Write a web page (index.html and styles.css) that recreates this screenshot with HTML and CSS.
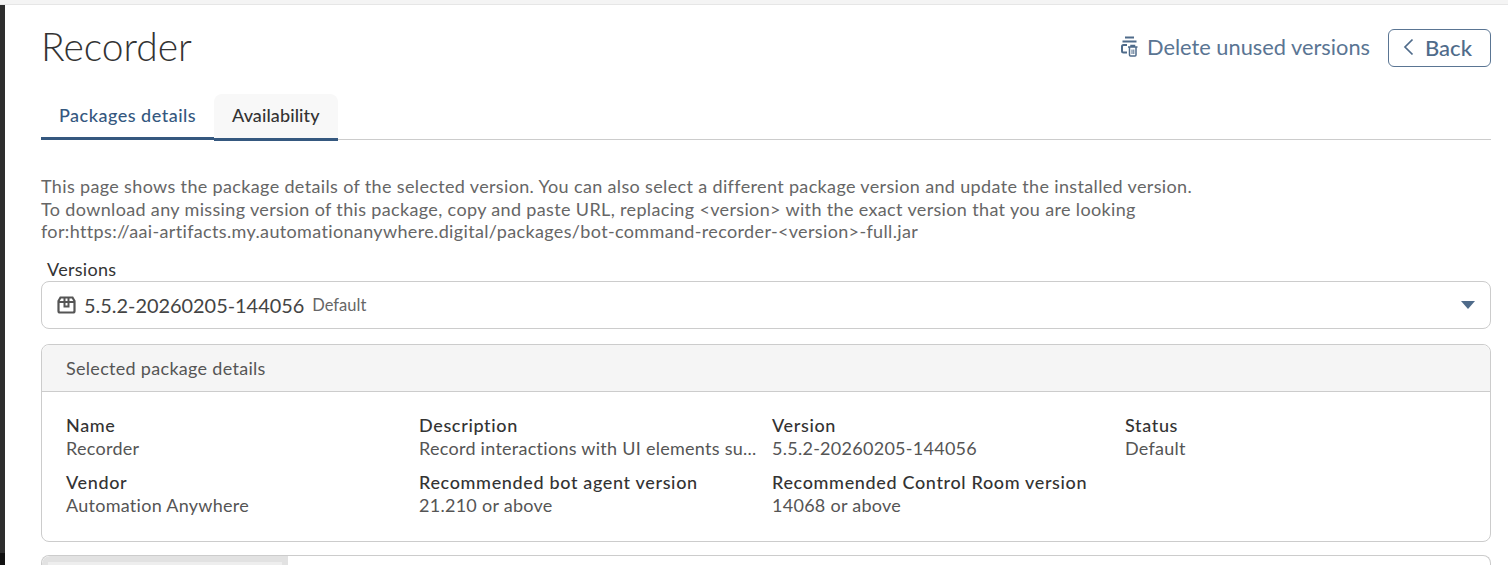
FILE: index.html
```html
<!DOCTYPE html>
<html lang="en">
<head>
    <meta charset="UTF-8">
    <title>Recorder</title>
    <link rel="stylesheet" href="styles.css">
</head>
<body>
    <div class="topstrip"></div>
    <div class="frame">
        <div class="sidebar"></div>
        <div class="page">
            <div class="header">
                <h1 class="title">Recorder</h1>
                <div class="actions">
                    <a class="link-action">
                        <svg width="17" height="21" viewBox="0 0 17 21">
                            <rect x="4" y="0.500" width="9" height="2" fill="#4f6b8a"/>
                            <rect x="1.500" y="4.500" width="14" height="2" fill="#4f6b8a"/>
                            <path d="M6 9H2.500A1.500 1.500 0 0 0 1 10.500V15a1.500 1.500 0 0 0 1.500 1.500H6" fill="none" stroke="#4f6b8a" stroke-width="2"/>
                            <path d="M7 11h9.500M10 11V9.500h3.500V11M8.500 11.500v7.500a1 1 0 0 0 1 1h4.500a1 1 0 0 0 1-1v-7.500" fill="none" stroke="#4f6b8a" stroke-width="1.500"/>
                            <path d="M11 13.500v4.500M12.800 13.500v4.500" stroke="#4f6b8a"/>
                        </svg>
                        <span>Delete unused versions</span>
                    </a>
                    <button class="back-btn">
                        <svg width="11" height="18" viewBox="0 0 11 18"><path d="M9.500 1.500L2 9l7.500 7.500" fill="none" stroke="#4f6b8a" stroke-width="1.700"/></svg>
                        <span>Back</span>
                    </button>
                </div>
            </div>

            <div class="tabs">
                <div class="tab tab-active">Packages details</div>
                <div class="tab tab-alt">Availability</div>
            </div>

            <p class="intro">This page shows the package details of the selected version. You can also select a different package version and update the installed version.<br>
            To download any missing version of this package, copy and paste URL, replacing &lt;version&gt; with the exact version that you are looking<br>
            for:https://aai-artifacts.my.automationanywhere.digital/packages/bot-command-recorder-&lt;version&gt;-full.jar</p>

            <label class="field-label">Versions</label>
            <div class="select">
                <svg width="19" height="18" viewBox="0 0 19 18">
                    <path d="M3.500 1.500h12L17.500 5v10a1.500 1.500 0 0 1-1.500 1.500H3A1.500 1.500 0 0 1 1.500 15V5z" fill="none" stroke="#555" stroke-width="2.200"/>
                    <path d="M1.500 6h16" stroke="#555" stroke-width="2"/>
                    <path d="M7.500 1.500v9h4v-9" fill="none" stroke="#555" stroke-width="2"/>
                </svg>
                <span class="select-value">5.5.2-20260205-144056</span>
                <span class="select-note">Default</span>
                <span class="caret"></span>
            </div>

            <div class="card">
                <div class="card-head">Selected package details</div>
                <div class="card-body">
                    <div class="info"><b>Name</b><span>Recorder</span></div>
                    <div class="info"><b>Description</b><span>Record interactions with UI elements su...</span></div>
                    <div class="info"><b>Version</b><span>5.5.2-20260205-144056</span></div>
                    <div class="info"><b>Status</b><span>Default</span></div>
                    <div class="info"><b>Vendor</b><span>Automation Anywhere</span></div>
                    <div class="info"><b>Recommended bot agent version</b><span>21.210 or above</span></div>
                    <div class="info"><b>Recommended Control Room version</b><span>14068 or above</span></div>
                </div>
            </div>

            <div class="card card-next">
                <div class="next-tab"><div class="next-tab-inner"></div></div>
            </div>
        </div>
    </div>
</body>
</html>
```

FILE: styles.css
```css
html, body {
    height: 565px;
    overflow: hidden;
}
body {
    margin: 0;
    background-color: #fff;
    font-family: 'Lato', 'Open Sans', sans-serif;
    color: #333;
}
.topstrip {
    height: 4px;
    background-color: #f4f4f4;
    border-bottom: 1px solid #e6e6e6;
}
.frame {
    display: flex;
    height: 560px;
}
.sidebar {
    width: 5px;
    background: linear-gradient(#2e2e2e 548px, #111 548px);
}
.page {
    flex: 1;
    padding: 0 17px 0 36px;
    min-width: 0;
}
.header {
    display: flex;
    justify-content: space-between;
    align-items: center;
    padding-top: 19px;
    height: 44px;
}
.title {
    margin: 0;
    font-size: 39px;
    font-weight: 300;
    color: #333;
}
.actions {
    display: flex;
    align-items: center;
    gap: 18px;
    margin-top: 4px;
}
.link-action {
    display: flex;
    align-items: center;
    gap: 9px;
    margin-top: -4px;
    font-size: 21.800px;
    color: #5a7593;
}
.back-btn {
    display: flex;
    align-items: center;
    gap: 11px;
    width: 103px;
    height: 38px;
    padding: 0 14px 2px;
    background: #fff;
    border: 1px solid #5a7593;
    border-radius: 6px;
    font-family: inherit;
    font-size: 22px;
    font-weight: 500;
    color: #4f6b8a;
}
.tabs {
    display: flex;
    margin-top: 26px;
    height: 45px;
    border-bottom: 1px solid #ccc;
}
.tab {
    padding: 0 18px;
    line-height: 42px;
    font-size: 18px;
    font-weight: 500;
    white-space: nowrap;
    box-sizing: border-box;
    height: 46px;
}
.tab-active {
    width: 173px;
    letter-spacing: 0.500px;
    color: #35587f;
    border-bottom: 3px solid #35587f;
}
.tab-alt {
    width: 124px;
    height: 47px;
    letter-spacing: 0.100px;
    background-color: #f8f8f8;
    border-bottom: 3px solid #35587f;
    border-radius: 8px 8px 0 0;
}
.intro {
    margin: 35px 0 0;
    font-size: 18px;
    line-height: 22.500px;
    letter-spacing: 0.350px;
    color: #666;
}
.field-label {
    display: block;
    margin: 15px 0 0 6px;
    font-size: 18px;
    line-height: 22px;
    letter-spacing: 0.300px;
}
.select {
    display: flex;
    align-items: center;
    height: 46px;
    margin-top: 1px;
    padding: 0 15px 0 15px;
    border: 1px solid #ccc;
    border-radius: 8px;
}
.select-value {
    margin-left: 8px;
    font-size: 19.900px;
    color: #444;
}
.select-note {
    margin-left: 8px;
    margin-top: 1px;
    font-size: 16.500px;
    color: #666;
}
.caret {
    margin-left: auto;
    border-left: 7px solid transparent;
    border-right: 7px solid transparent;
    border-top: 8px solid #4f6b8a;
}
.card {
    margin-top: 15px;
    border: 1px solid #ccc;
    border-radius: 8px;
}
.card-head {
    height: 46px;
    line-height: 46px;
    padding-left: 24px;
    background-color: #f5f5f5;
    border-bottom: 1px solid #ccc;
    border-radius: 8px 8px 0 0;
    font-size: 18px;
    letter-spacing: 0.300px;
    color: #555;
}
.card-body {
    display: grid;
    grid-template-columns: repeat(4, 353px);
    row-gap: 11px;
    padding: 22px 24px 24px;
}
.info b {
    display: block;
    font-size: 18px;
    line-height: 23px;
    font-weight: 500;
    letter-spacing: 0.650px;
    color: #333;
}
.info span {
    display: block;
    font-size: 18px;
    line-height: 23px;
    letter-spacing: 0.270px;
    color: #555;
}
.card-next {
    margin-top: 13px;
    height: 9px;
    border-bottom: 0;
    border-radius: 8px 8px 0 0;
    overflow: hidden;
}
.next-tab {
    box-sizing: border-box;
    width: 246px;
    height: 9px;
    padding: 6px 6px 0 6px;
    background-color: #e2e2e2;
    border-radius: 8px 0 0 0;
}
.next-tab-inner {
    height: 3px;
    background-color: #eee;
}
```
